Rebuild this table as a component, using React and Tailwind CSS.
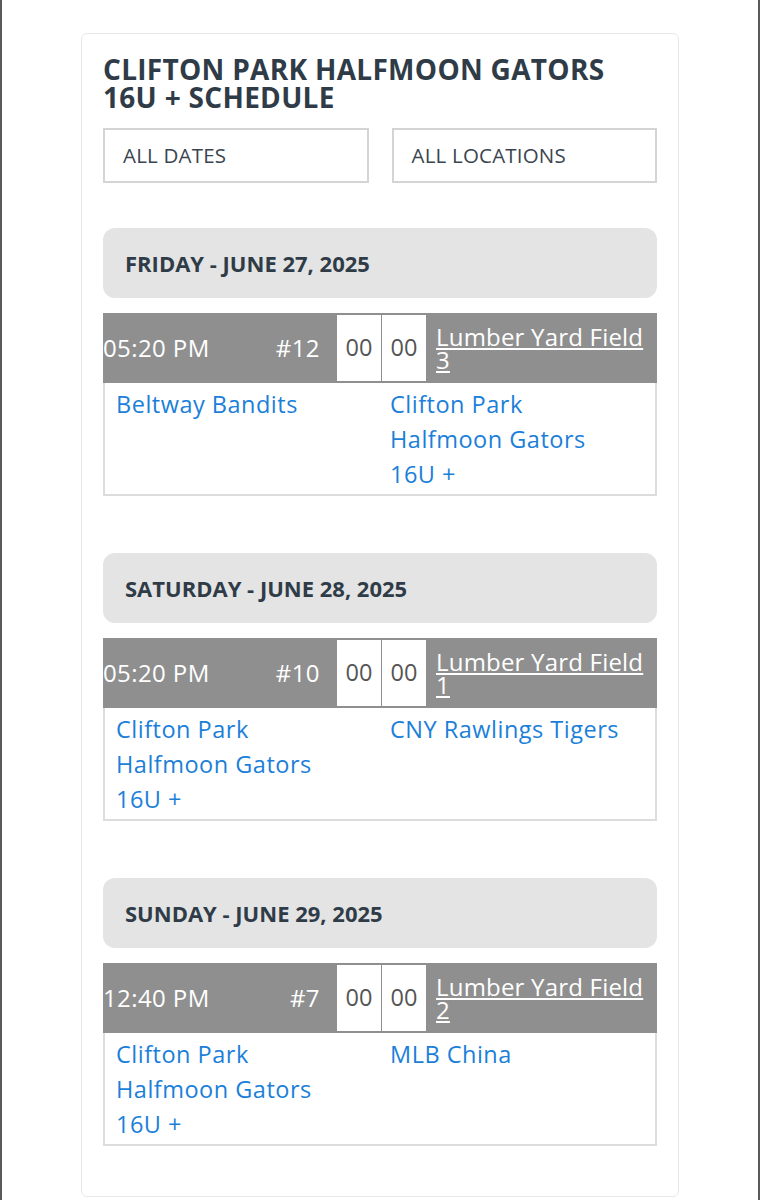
import React from 'react';

const days = [
    {
        date: 'FRIDAY - JUNE 27, 2025',
        time: '05:20 PM',
        game: '#12',
        field: 'Lumber Yard Field 3',
        home: 'Beltway Bandits',
        away: 'Clifton Park Halfmoon Gators 16U +',
    },
    {
        date: 'SATURDAY - JUNE 28, 2025',
        time: '05:20 PM',
        game: '#10',
        field: 'Lumber Yard Field 1',
        home: 'Clifton Park Halfmoon Gators 16U +',
        away: 'CNY Rawlings Tigers',
    },
    {
        date: 'SUNDAY - JUNE 29, 2025',
        time: '12:40 PM',
        game: '#7',
        field: 'Lumber Yard Field 2',
        home: 'Clifton Park Halfmoon Gators 16U +',
        away: 'MLB China',
    },
];

const Day = ({ day, first }) => (
    <div className={first ? 'mt-[45px]' : 'mt-[57px]'}>
        <div className="h-[70px] rounded-xl bg-[#e4e4e4] flex items-center pl-[22px]">
            <h2 className="text-[22px] font-bold text-[#2f3c48]">{day.date}</h2>
        </div>

        <div className="mt-[15px]">
            <div className="h-[70px] bg-[#8f8f8f] flex items-stretch text-white text-[24px] tracking-[0.4px]">
                <div className="flex-1 flex items-center justify-between pr-[17px]">
                    <span>{day.time}</span>
                    <span>{day.game}</span>
                </div>
                <div className="flex gap-[1px] py-[2px] text-[23.5px] tracking-normal">
                    <div className="w-[44px] bg-white text-[#555] flex items-center justify-center">00</div>
                    <div className="w-[44px] bg-white text-[#555] flex items-center justify-center">00</div>
                </div>
                <div className="w-[231px] pl-[10px] pr-[6px] flex items-center">
                    <a href="#" className="underline leading-[23px] tracking-[0.2px] text-white">{day.field}</a>
                </div>
            </div>
            <div className="border-2 border-t-0 border-[#dcdcdc] grid grid-cols-2 pt-[4px] pb-[2px] text-[23.5px] tracking-[0.5px] leading-[35px] text-[#1b7fd9]">
                <div className="pl-[11px] pr-[28px]">{day.home}</div>
                <div className="pl-[10px] pr-[28px]">{day.away}</div>
            </div>
        </div>
    </div>
);

export default function App() {
    return (
        <div className="min-h-[1200px] bg-white border-l-2 border-r-2 border-[#5a5a5a] flex justify-center pt-[33px]"
            style={{ fontFamily: '"Open Sans", "Noto Sans", sans-serif' }}>
            <div className="w-[598px] self-start border border-[#e8e8e8] rounded-md px-[21px] pt-[21px] pb-[50px]">
                <h1 className="text-[28px] font-bold leading-[28px] tracking-[0.3px] text-[#2f3c48] pr-10">
                    CLIFTON PARK HALFMOON GATORS 16U + SCHEDULE
                </h1>

                <div className="mt-[17px] grid grid-cols-2 gap-[23px]">
                    <div className="h-[55px] border-2 border-[#d4d4d4] flex items-center pl-[18px] text-[20.5px] tracking-[0.2px] text-[#3a4550]">
                        ALL DATES
                    </div>
                    <div className="h-[55px] border-2 border-[#d4d4d4] flex items-center pl-[18px] text-[20.5px] tracking-[0.2px] text-[#3a4550]">
                        ALL LOCATIONS
                    </div>
                </div>

                {days.map((d, i) => (
                    <Day key={i} day={d} first={i === 0} />
                ))}
            </div>
        </div>
    );
}
